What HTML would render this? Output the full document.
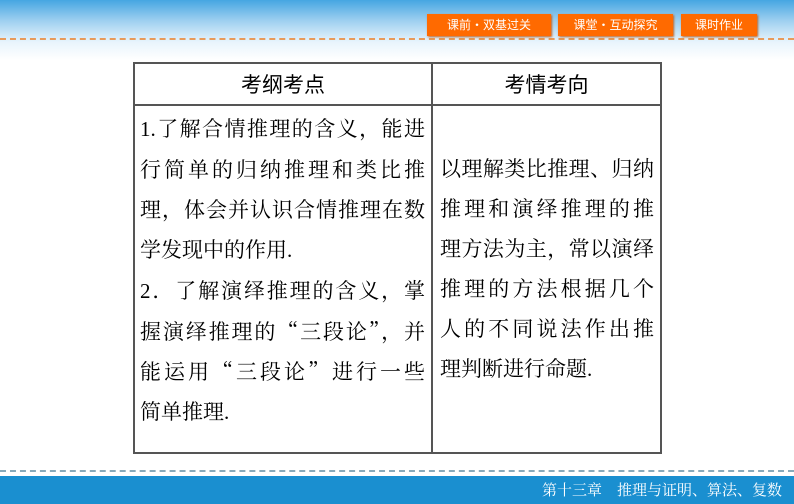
<html><head><style>
body{margin:0;width:794px;height:504px;overflow:hidden;position:relative;background:#fff;font-family:"Noto Serif CJK SC","Liberation Serif",serif}
.top{position:absolute;left:0;top:0;width:794px;height:60px;background:linear-gradient(#45a6e2 0%,#9fd0f0 35%,#e8f4fc 70%,#fff 100%)}
.dash{position:absolute;left:0;width:794px;border-top:2px dashed #e89a5a}
.btn{position:absolute;top:14px;height:22px;background:#ff6a00;color:#fff;font:12px "Noto Sans CJK SC",sans-serif;line-height:22px;text-align:center;box-shadow:1px 1px 2px #c06020}
.foot{position:absolute;left:0;top:476px;width:794px;height:28px;background:#1a8fd0;color:#fff;font-size:15px;line-height:28px}
table{position:absolute;left:133px;top:62px;border-collapse:collapse}
td{border:2px solid #555;vertical-align:top;padding:0}
.h{height:42px;text-align:center;font:normal 21px "Noto Sans CJK SC",sans-serif;line-height:40px}
.c{font-size:21px;line-height:40px}
.c div{text-align:justify;text-align-last:justify;white-space:nowrap}
.c div.l{text-align-last:left}
.n{font-family:"Liberation Serif",serif}
</style></head><body>
<div class="top"></div>
<div class="dash" style="top:38px"></div>
<div class="btn" style="left:427px;width:124px">课前·双基过关</div>
<div class="btn" style="left:558px;width:115px">课堂·互动探究</div>
<div class="btn" style="left:681px;width:76px">课时作业</div>
<table>
<tr><td class="h" style="width:296px">考纲考点</td><td class="h" style="width:227px">考情考向</td></tr>
<tr><td class="c" style="height:348px;padding:2px 6px 0 5px;width:285px">
<div><span class="n">1.</span>了解合情推理的含义，能进</div>
<div>行简单的归纳推理和类比推</div>
<div>理，体会并认识合情推理在数</div>
<div class="l">学发现中的作用<span class="n">.</span></div>
<div><span class="n">2</span>．了解演绎推理的含义，掌</div>
<div>握演绎推理的“三段论”，并</div>
<div>能运用“三段论”进行一些</div>
<div class="l">简单推理<span class="n">.</span></div></td>
<td class="c" style="padding:42px 6px 0 7px;width:214px">
<div>以理解类比推理、归纳</div>
<div>推理和演绎推理的推</div>
<div>理方法为主，常以演绎</div>
<div>推理的方法根据几个</div>
<div>人的不同说法作出推</div>
<div class="l">理判断进行命题<span class="n">.</span></div></td></tr>
</table>
<div class="dash" style="top:470px;border-color:#8ab"></div>
<div class="foot"><span style="position:absolute;right:12px">第十三章　推理与证明、算法、复数</span></div>
</body></html>
